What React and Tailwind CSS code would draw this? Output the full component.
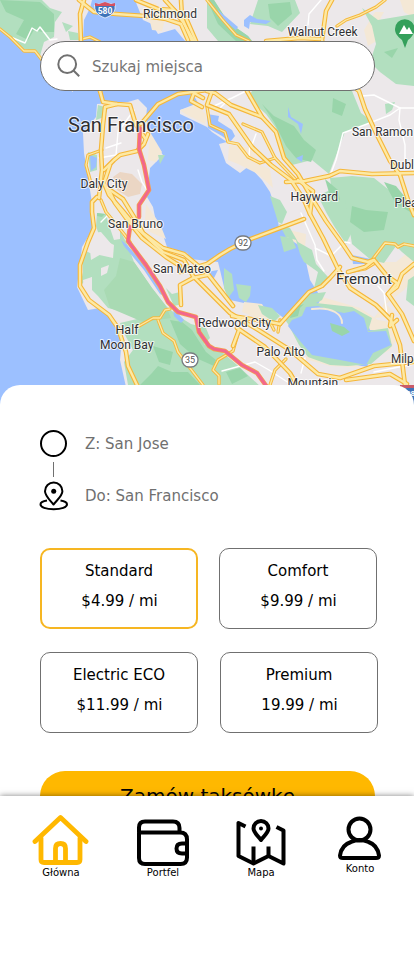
import React from "react";

const LAND = [
  // Marin headlands
  "M0 0H92L90 8L84 20L83 40L74 60L73 92L60 84L46 66L40 56L33 52L22 51L12 38L0 30Z",
  // East bay and south bay shoreline
  "M135 0L143 20L152 24L158 34L175 29L186 42L196 60L192 92L198 103L180 110L180 114L207 127L212 132L227 142L219 144L226 163L240 173L249 166L262 180L270 192L277 213L279 228L300 240L306 262L310 280L320 296L330 306L340 313L354 310L367 318L370 330L384 331L392 345L374 353L367 367L340 362L310 357L300 343L289 322L277 313L260 305L244 303L230 300L224 287L220 270L218 262L190 259L187 253L167 247L163 235L157 227L153 207L147 197L148 187L150 168L163 155L150 137L146 118L147 108L138 99L128 102L97 104L96 117L83 133L84 153L88 177L92 203L92 230L82 247L77 287L88 310L100 308L113 320L122 337L120 360L130 405H414V0Z",
];

const GREEN = [
  "M0 0H42L50 8L62 12L55 22L54 37L44 42L40 56L36 52L24 49L10 37L0 29Z",
  "M62 22L73 26L66 32ZM68 31L78 33L79 40H70Z",
  "M98 105L108 108L104 117L96 120Z",
  "M88 152L97 155L97 170L90 172Z",
  "M97 213L106 214L108 222L114 240L120 239L120 230L128 246L134 262L152 288L166 306L171 318L155 323L143 322L124 312L108 308L98 296L92 290L92 277L84 282L80 286L83 272L82 256L84 250L90 253L95 254L113 258L114 245L100 238L96 226Z",
  "M120 323L150 316L166 306L178 316L191 324L206 328L210 338L204 344L222 352L236 364L262 388V405H134L128 385L124 362L133 350L124 333Z",
  "M166 288L172 294L180 292L182 304L174 306Z",
  "M207 0H214L228 22L248 36L252 41H218L207 28Z",
  "M258 0H295L300 13L282 32L268 26L250 24Z",
  "M362 8L378 20L414 14V86L396 84L380 72L370 62L376 44L372 26Z",
  "M252 91H352L361 113L373 122L352 130L345 132L329 174L312 160L292 165L280 150L276 128L266 114L248 98Z",
  "M330 178L352 176L374 178L394 194L397 203L414 212V262L402 252L396 246L384 263L371 260L352 244L350 232L344 214L334 208Z",
  "M318 196L330 190L345 200L352 232L346 244L334 226L326 212Z",
  "M270 196L280 200L287 212L282 224L278 222Z",
  "M279 224L290 228L298 242L312 250L316 264L328 277L324 284L314 288L318 272L304 262L300 254L296 240L286 237Z",
  "M280 236L292 238L296 248L284 252Z",
  "M224 268L232 274L234 290L228 298L224 288Z",
  "M236 284L251 286L250 296L246 302L239 298Z",
  "M258 305L272 308L280 316L274 322L262 314Z",
  "M288 324L284 318L296 309L302 298L310 294L326 292L322 300L316 303L352 307L372 318L368 331L388 328L392 346L371 364L348 366L330 365L308 357L299 345Z",
  "M385 104L395 102L392 110L386 114Z",
  "M408 280L414 276V306L406 300Z",
  "M158 155L165 155L160 164Z",
];

const DARK_GREEN = [
  "M0 0L40 2L54 14L54 32L42 32L34 30L28 40L16 34L24 20L6 12Z",
  "M170 320L182 322L192 330L206 352L216 360L214 366L196 358L180 344Z",
  "M153 346L173 352L170 365L159 362Z",
  "M140 385L152 373L158 366L172 372L188 372L200 385Z",
  "M226 372L240 368L248 376L232 384Z",
  "M207 0H214L228 22L248 36L252 41H236L218 24Z",
  "M268 4L290 2L292 14L278 26L270 18Z",
  "M262 104L274 116L294 126L304 140L316 150L311 162L296 158L286 146L274 122Z",
  "M325 179L338 190L340 200L330 196Z",
  "M352 206L366 210L388 212L384 230L364 232L350 222Z",
  "M384 182L396 186L414 208V214L396 204Z",
  "M333 98L346 104L342 116L332 112Z",
  "M97 213L105 214L102 217L97 216Z",
  "M304 304L292 308L290 318L298 316L300 308Z",
  "M330 322L348 330L340 335L333 331Z",
  "M384 52L398 48L392 58Z",
];

const SAND = [
  "M146 5L156 3L165 20L162 31L152 30Z",
  "M180 110L198 105L207 116L205 124L185 114Z",
  "M229 145L252 148L260 165L270 169L273 188L258 174L238 164L228 160Z",
  "M375 12H384L375 28L378 40L368 46L364 30Z",
  "M400 0H414V18L404 12Z",
  "M285 229L306 234L305 249L286 237Z",
  "M150 132L162 152L156 162L148 160Z",
  "M146 204L160 224L166 239L150 232L145 220Z",
  "M244 302L262 304L268 314L280 318L278 328L252 316L242 312Z",
  "M322 297L360 308L378 320L390 322L396 340L390 350L378 356L368 368L330 366L305 359L309 350L330 362L367 367L374 353L392 345L384 330L370 330L367 318L350 308L335 313L318 304Z",
  "M376 262L396 262L406 254L414 258V278L404 290L386 304L398 316L374 318L388 298L394 284Z",
];

const WATER = [
  "M207 114L219 116L218 121L232 130L235 136L230 142L222 136L208 128Z",
  "M244 20L250 15L257 19L271 21L266 24L250 22L249 29L244 26Z",
  "M218 10L238 27L236 30L220 17Z",
  "M288 107L291 117L303 124L301 134L298 124L288 117Z",
  "M296 158L303 155L302 162Z",
  "M352 255L375 260L368 264L353 264Z",
  "M90 155L97 158L96 167L91 171Z",
  "M121 240L128 246L146 266L164 296L160 294L144 270L124 246Z",
  "M173 308L184 320L181 323L174 316Z",
  "M288 326L292 320L302 316L306 307L318 306L330 310L344 313L354 311L364 318L368 332L386 331L391 345L373 353L366 365L340 360L312 355L300 341Z",
  "M207 272L218 270L214 278L208 276Z",
];

const WHITE_ROADS = [
  "M13 38L25 43L32 28L37 31L40 27L50 40L57 39",
  "M321 0L309 14L308 25",
  "M214 106L232 98L246 91M218 110L226 102",
  "M362 96L374 95L400 108H414",
  "M330 176L336 160L343 133L367 124L390 115L400 108",
  "M400 108L399 120L405 145V160",
  "M252 145L256 134M249 156L250 143",
  "M99 158L116 155L118 132L134 110M120 130L142 132M106 148L121 143M120 120L118 132",
  "M301 213L315 245L317 260L324 271M315 248L331 256L345 242L350 243",
  "M222 371L255 362L269 370L292 385M305 358L301 373",
  "M378 286L384 293L387 315",
  "M374 372L414 364",
  "M101 222L108 215M138 170L142 182L147 190",
];

// Narrow state routes and connectors
const MINOR_ROADS = [
  "M0 29L10 37L24 51L35 51L42 60",
  "M82 39L90 37L100 42",
  "M102 150L88 155L86 165L92 187",
  "M207 107L210 125L225 132L228 142L238 144L248 157L260 163L275 158L270 148L262 132L243 124",
  "M101 200L106 212L116 224L124 234L130 242",
  "M372 260L385 243L395 244L398 247L404 244L414 246",
  "M158 320L163 333L174 341L178 352L190 368L203 385",
  "M280 320L278 332M270 322L274 330",
  "M239 330L233 351L218 360L213 370L219 376L219 384",
  "M286 359L275 370L270 385",
  "M349 272L365 269L375 263",
  "M207 0L222 19L236 35L249 41",
  "M385 0L376 7L360 15L346 20L337 26",
  "M275 158L298 182",
  "M139 326L153 318L160 318L165 310L170 309",
];

const ROADS = [
  "M84 0L80 14L81 42L88 60L100 91",
  "M79 0L94 12L116 14L145 16L166 19L181 24L188 40",
  "M136 0L158 9L174 10L183 22L194 41",
  "M165 0L176 12L186 18L196 41",
  "M181 0L182 18L192 41",
  "M332 0L326 11L322 40L330 70L359 91L365 109L377 135L390 161L400 175L409 203L414 215",
  "M266 41L300 38L320 39",
  "M100 91L103 102L117 104L130 105L136 125L145 138",
  "M117 104L105 107L103 125L101 150L102 170L99 198",
  "M141 124L158 104L178 94L207 90",
  "M203 98L194 93L191 101L202 107",
  "M104 170L114 160L120 155L137 151L144 144L148 134",
  "M97 197L92 202L92 212L94 228L88 242L80 265V286L89 300L109 315L118 328L126 352L128 366L137 385L142 392",
  "M110 165L104 183L109 195L122 210L136 227L149 239L163 252L184 260L193 276L207 290L230 313L260 331L290 350L318 374L340 378L374 366L414 362",
  "M107 188L123 199L134 217L143 233L163 248L184 254L207 273L233 306",
  "M109 190L115 203L126 218L142 238L166 257L180 266",
  "M207 91L215 93L231 105L262 117L276 132L284 158L298 174L313 200L326 221L344 246L352 258L368 262L374 260L387 276L397 283L388 294L402 314L414 341",
  "M212 91L207 105L229 114L252 147L271 165L291 180L304 200L310 214L323 238L338 269L350 288L376 305L391 320L400 345L405 385",
  "M247 91L262 117",
  "M286 182L305 181L329 176L340 171L372 174L414 173",
  "M298 180L313 191L310 214",
  "M180 272L207 264L220 255L230 249L248 240L304 219",
  "M280 324L309 292L322 286L330 278L340 267",
  "M414 264L402 274L397 287L388 294",
  "M280 324L270 322L232 316",
  "M348 272L365 267L374 260",
  "M181 305L180 285L193 278L207 275",
  "M237 328L265 347L290 373L297 385",
  "M239 330L233 346",
  "M397 320L390 326L392 315",
  "M407 384L390 374L346 380",
];

const ROUTE = [
  "M140 128L139 149L144 165L149 190L139 205L139 217",
  "M130 227L128 241L146 265L160 286L168 302L178 312L196 317L199 332L209 346L214 349L225 351L242 365L257 373L267 387",
];

const LABELS = [
  ["Richmond", 143, 18, 54, 12],
  ["Walnut Creek", 287.5, 36, 70, 12],
  ["San Francisco", 68, 132, 126, 20.5],
  ["Daly City", 80.5, 188, 47, 12],
  ["San Ramon", 352, 136, 61, 12],
  ["Dubl", 390, 169, 24, 12],
  ["Hayward", 290.5, 201, 47.5, 12],
  ["Plea", 394.5, 207, 23, 12],
  ["San Bruno", 108, 227.5, 55, 12],
  ["San Mateo", 153, 273, 58, 12],
  ["Fremont", 336, 284, 56, 14.5],
  ["Redwood City", 198, 327, 73, 12],
  ["Half", 115.5, 334, 23, 12],
  ["Moon Bay", 100, 348.5, 53.5, 12],
  ["Palo Alto", 256.5, 356, 48.5, 12],
  ["Milp", 391, 362.5, 22.5, 12],
  ["Mountain", 287.5, 387, 50.5, 12],
];

function RouteBadge({ x, y, n }) {
  return (
    <g>
      <rect x={x - 8} y={y - 7} width="16" height="14" rx="7" fill="#fff" stroke="#777b80" strokeWidth="1.3" />
      <text x={x} y={y + 3.3} textAnchor="middle" fontSize="9" fill="#555">{n}</text>
    </g>
  );
}

function BayMap() {
  return (
    <svg className="block h-[405px] w-full shrink-0 font-['Roboto',sans-serif]" viewBox="0 0 414 405" fill="none" strokeLinejoin="round" strokeLinecap="round">
      <rect width="414" height="405" fill="#9cc0ff" />
      {LAND.map((d) => <path key={d} d={d} fill="#ece8ea" />)}
      {SAND.map((d) => <path key={d} d={d} fill="#f4e8d6" />)}
      <path d="M113 177L120 172L132 174L142 184L140 194L128 197L117 190Z" fill="#ebd6c4" />
      {GREEN.map((d) => <path key={d} d={d} fill="#b2dfbf" />)}
      <path d="M120 258L134 262L152 288L166 306L171 318L143 322L110 308L104 290L116 276Z" fill="#a9dab3" />
      {DARK_GREEN.map((d) => <path key={d} d={d} fill="#99d5aa" />)}
      {WATER.map((d) => <path key={d} d={d} fill="#9cc0ff" />)}
      <path d="M312 309Q326 307 335 312Q342 316 342 323" stroke="#f4e8d6" strokeWidth="2" />
      <path d="M330 323L344 327L350 332L342 336L332 331Z" fill="#99d5aa" />
      <path d="M91 233L101 232L113 246L112 257L103 253L91 260L90 250Z" fill="#ece8ea" />
      <path d="M101 268L109 265L107 273L101 276ZM83 280L92 277L91 287L84 290Z" fill="#ece8ea" />
      {WHITE_ROADS.map((d) => <path key={d} d={d} stroke="#fff" strokeWidth="1.4" />)}
      {MINOR_ROADS.map((d) => <path key={d} d={d} stroke="#f5b93f" strokeWidth="3.3" />)}
      {MINOR_ROADS.map((d) => <path key={d} d={d} stroke="#fde9a4" strokeWidth="1.3" />)}
      {ROADS.map((d) => <path key={d} d={d} stroke="#f5b638" strokeWidth="4.6" />)}
      {ROADS.map((d) => <path key={d} d={d} stroke="#fde9a4" strokeWidth="2.4" />)}
      {ROUTE.map((d) => <path key={d} d={d} stroke="#f5a24c" strokeWidth="4.6" />)}
      {ROUTE.map((d) => <path key={d} d={d} stroke="#f2678c" strokeWidth="3.1" />)}
      <path d="M95 5Q105 1 115 5V9Q114 15 105 18Q96 15 95 9Z" fill="#3f74b9" stroke="#fff" strokeWidth="0.7" />
      <path d="M95 3L99 4L105 2L111 4L115 3V6H95Z" fill="#d75261" />
      <text x="105" y="14" textAnchor="middle" fontSize="8.5" fontWeight="700" fill="#fff">580</text>
      <RouteBadge x={243} y={243} n="92" />
      <RouteBadge x={190} y={360} n="35" />
      <path d="M405 48L402 40C397 36 395 33 395 29A9.8 9.8 0 0 1 414.600 29C414.600 33 412 37 408 40Z" fill="#34a05b" />
      <path d="M399 34L404 25L407 30L409 27L413 34Z" fill="#fff" />
      <path d="M400 388H414V405H404Z" fill="#3f74b9" />
      <path d="M400 385H414V388H400Z" fill="#c95b69" />
      <text x="406" y="396" fontSize="8" fontWeight="700" fill="#fff">880</text>
      {LABELS.map(([name, x, y, w, size]) => (
        <text key={name} x={x} y={y} textLength={w} lengthAdjust="spacingAndGlyphs" fontSize={size} fill="#303032" stroke="#fff" strokeOpacity="0.75" strokeWidth="2" paintOrder="stroke">{name}</text>
      ))}
    </svg>
  );
}

function HomeIcon() {
  return (
    <svg width="58" height="52" viewBox="0 0 58 52" fill="none" stroke="#ffb800" strokeWidth="4.8" strokeLinejoin="round" strokeLinecap="round">
      <path d="M3 27.500L28.500 3.500L54 27.500" />
      <path d="M9 24V45.500Q9 48.500 12 48.500H45Q48 48.500 48 45.500V24" />
      <path d="M23.500 47V34.500Q23.500 29.500 28.500 29.500Q33.500 29.500 33.500 34.500V47" />
    </svg>
  );
}

function WalletIcon() {
  return (
    <svg width="54" height="48" viewBox="0 0 54 48" fill="none" stroke="#000" strokeWidth="4" strokeLinejoin="round">
      <path d="M3 14V9.500Q3 3.500 9 3.500H37Q43.500 3.500 43.500 10V14" />
      <path d="M3 14.500H44Q51 14.500 51 21.500V39.500Q51 46 44.500 46H9Q3 46 3 40Z" />
      <path d="M51 25.500H46Q40.500 25.500 40.500 30.500Q40.500 35.500 46 35.500H51" />
    </svg>
  );
}

function MapIcon() {
  return (
    <svg width="50" height="48" viewBox="0 0 50 48" fill="none" stroke="#000" strokeWidth="4" strokeLinejoin="round">
      <path d="M9.500 8.500L2.500 5V38L17.500 45.500L32.500 38L47.500 45.500V12.500L40.500 9" />
      <path d="M17.500 45V28.500M32.500 38V28.500" />
      <path d="M25 22C21 17 17.500 14 17.500 10.500A7.500 7.500 0 0 1 32.500 10.500C32.500 14 29 17 25 22Z" />
      <circle cx="25" cy="10.500" r="2" fill="#000" stroke="none" />
    </svg>
  );
}

function AccountIcon() {
  return (
    <svg width="44" height="44" viewBox="0 0 44 44" fill="none" stroke="#000" strokeWidth="4" strokeLinejoin="round">
      <circle cx="21.500" cy="13.500" r="11" />
      <path d="M13 26C6.500 28 3 33 2 39.500Q2 42 5 42H38Q41 42 41 39.500C40 33 36.500 28 30.500 26Q21.500 22 13 26Z" />
    </svg>
  );
}

function PlanCard({ name, price, active }) {
  return (
    <button className={`flex h-[81px] w-[158px] shrink-0 flex-col items-center rounded-[10px] bg-white text-[15px] leading-[30px] font-normal text-black ${active ? "border-2 border-[#f6b622] pt-1.5" : "border border-[#707070] pt-[7px]"}`}>
      <span>{name}</span>
      <span className="pl-px">{price}</span>
    </button>
  );
}

function NavItem({ icon, label, className }) {
  return (
    <a className={`flex flex-col items-center text-[10px] leading-[14px] text-black ${className}`}>
      {icon}
      <span>{label}</span>
    </a>
  );
}

export default function App() {
  return (
    <div className="flex h-[963px] w-[414px] flex-col overflow-hidden bg-white font-['DejaVu_Sans',sans-serif]">
      <header className="relative h-[405px] shrink-0">
        <BayMap />
        <label className="absolute top-[41px] left-10 flex h-[50px] w-[335px] items-center rounded-full border border-[#707070] bg-white pl-4">
          <svg width="24" height="24" viewBox="0 0 24 24" fill="none" stroke="#707070" strokeWidth="2">
            <circle cx="10.200" cy="10.200" r="8.900" />
            <path d="M16.500 16.500L22.200 22.200" />
          </svg>
          <span className="mt-0.5 ml-[11px] text-[15px] text-[#757575]">Szukaj miejsca</span>
        </label>
      </header>

      <main className="relative -mt-5 flex h-[411px] shrink-0 flex-col overflow-hidden rounded-t-[20px] bg-white pt-[45px] pr-9 pl-10">
        <div className="flex h-7 shrink-0 items-center">
          <svg width="28" height="28" viewBox="0 0 28 28" fill="none" stroke="#000" strokeWidth="2">
            <circle cx="13.500" cy="13.500" r="12.500" />
          </svg>
          <span className="ml-[17px] text-[15px] text-[#707070]">Z: San Jose</span>
        </div>
        <div className="mt-1 ml-[13px] h-[15px] w-px shrink-0 bg-[#707070]" />
        <div className="mt-1 flex h-[30px] shrink-0 items-center">
          <svg className="-ml-px" width="30" height="30" viewBox="0 0 30 30" fill="none" stroke="#000" strokeWidth="2" strokeLinejoin="round">
            <path d="M14.500 23.500C10 18 6 14.500 6 10.200A8.700 8.700 0 0 1 23.400 10.200C23.400 14.500 19 18 14.500 23.500Z" />
            <circle cx="14.700" cy="10.300" r="2.500" fill="#000" stroke="none" />
            <path d="M8 19.500C3.500 20.200 1.500 21.500 1.500 23.300C1.500 26.300 7 28.300 14.700 28.300S28 26.300 28 23.300C28 21.500 26 20.200 21.500 19.500" />
          </svg>
          <span className="ml-4 text-[15px] text-[#707070]">Do: San Francisco</span>
        </div>

        <div className="mt-[37px] flex shrink-0 gap-[21px]">
          <PlanCard name="Standard" price="$4.99 / mi" active />
          <PlanCard name="Comfort" price="$9.99 / mi" />
        </div>
        <div className="mt-[23px] flex shrink-0 gap-[22px]">
          <PlanCard name="Electric ECO" price="$11.99 / mi" />
          <PlanCard name="Premium" price="19.99 / mi" />
        </div>
        <button className="mt-[38px] h-[50px] w-[335px] shrink-0 rounded-full bg-[#ffb800] text-xl text-black">Zamów taksówkę</button>
      </main>

      <nav className="relative flex grow items-start bg-white shadow-[0_0_6px_rgba(0,0,0,0.5)]">
        <NavItem className="mt-[18px] ml-8" icon={<HomeIcon />} label="Główna" />
        <NavItem className="mt-[22px] ml-[46px]" icon={<WalletIcon />} label="Portfel" />
        <NavItem className="mt-[22px] ml-[46px]" icon={<MapIcon />} label="Mapa" />
        <NavItem className="mt-5 ml-[52px] gap-0.5" icon={<AccountIcon />} label="Konto" />
      </nav>
    </div>
  );
}
